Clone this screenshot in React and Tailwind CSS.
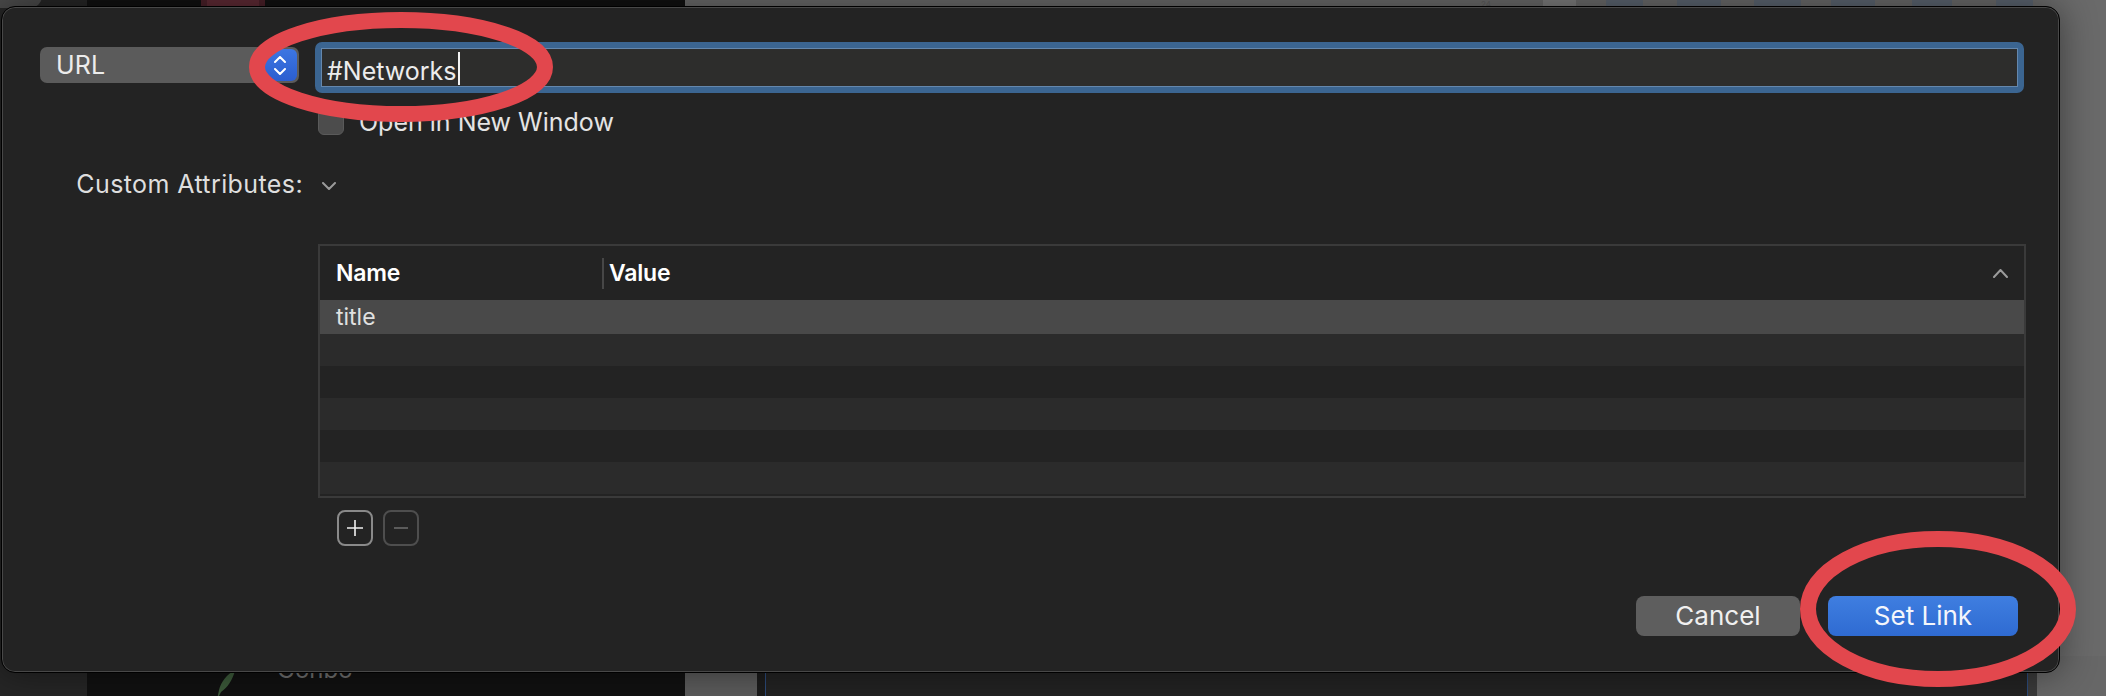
import React from "react";

function Chevron({ dir = "down", className = "", w = 14, h = 8, stroke = "#9c9c9c", sw = 2 }) {
  const d = dir === "down" ? `M1 1 L${w / 2} ${h - 1} L${w - 1} 1` : `M1 ${h - 1} L${w / 2} 1 L${w - 1} ${h - 1}`;
  return (
    <svg width={w} height={h} viewBox={`0 0 ${w} ${h}`} className={className}>
      <path d={d} fill="none" stroke={stroke} strokeWidth={sw} strokeLinecap="round" strokeLinejoin="round" />
    </svg>
  );
}

export default function App() {
  const rows = ["#2b2b2b", "#232323", "#2b2b2b", "#232323", "#2b2b2b"];
  return (
    <div className="relative w-[2106px] h-[696px] overflow-hidden flex font-['Inter',sans-serif]">
      {/* background window behind the sheet */}
      <div className="w-[87px] bg-[#262626] relative">
        <div className="absolute left-[-12px] top-[-22px] w-[54px] h-[30px] rounded-[12px] bg-[#4a4a4a]" />
      </div>
      <div className="w-[598px] bg-[#111111] flex flex-col">
        <div className="ml-[114px] w-[64px] h-[7px] bg-[#5e2a34] border-x-[6px] border-[#4a2029]" />
        <div className="flex-1" />
        <div className="h-[40px] flex items-end pl-[128px] gap-[38px]">
          <svg width="24" height="30" viewBox="0 0 24 30" className="mb-[-4px]">
            <path d="M20 0 C12 4 6 12 4 20 L2 30 L6 22 C12 18 18 10 20 0 Z" fill="#3c5a3a" />
          </svg>
          <span className="text-[24px] leading-none text-[#6e6e6e] mb-[14px]">Gonbo</span>
        </div>
      </div>
      <div className="flex-1 bg-[#6a6a6a] flex flex-col">
        <div className="h-[8px] flex items-start">
          <span className="ml-[796px] text-[8px] leading-[8px] text-[#5a5a5a]">24</span>
          <div className="ml-[52px] w-[33px] h-[6px] bg-[#7c7c7c]" />
          <div className="ml-[30px] w-[37px] h-[6px] bg-[#5b6470]" />
          <div className="ml-[34px] w-[44px] h-[6px] bg-[#5b6470]" />
          <div className="ml-[33px] w-[47px] h-[6px] bg-[#5b6470]" />
          <div className="ml-[30px] w-[44px] h-[6px] bg-[#5b6470]" />
          <div className="ml-[37px] w-[40px] h-[6px] bg-[#5b6470]" />
          <div className="ml-[44px] w-[37px] h-[6px] bg-[#5b6470]" />
        </div>
        <div className="flex-1" />
        <div className="h-[40px] flex">
          <div className="w-[72px] bg-[#5c5c5c]" />
          <div className="w-[8px] bg-[#1c1c1c]" />
          <div className="flex-1 bg-[#232323] border-x border-[#2c4a7a]" />
          <div className="w-[9px] bg-[#3a3a3a]" />
          <div className="w-[69px] bg-[#676767]" />
        </div>
      </div>

      {/* the sheet dialog */}
      <div className="absolute left-[1px] top-[6px] w-[2059px] h-[667px] rounded-[14px] bg-[#232323] border border-black shadow-[inset_0_0_0_1px_#484848,0_0_36px_rgba(0,0,0,0.45)] flex flex-col pt-[35px] text-[#e4e4e4]">
        {/* row 1: popup + field */}
        <div className="flex items-start">
          <div className="ml-[38px] mt-[5px] w-[259px] h-[36px] rounded-[7px] bg-[#5b5b5b] flex items-center justify-between pl-[16px] pr-[2px]">
            <span className="text-[25px] leading-none text-[#ececec] tracking-[0.2px]">URL</span>
            <div className="w-[34px] h-[32px] rounded-[6px] bg-gradient-to-b from-[#3d76e2] to-[#2b5ed0] flex flex-col items-center justify-center gap-[5px]">
              <Chevron dir="up" w={12} h={7} stroke="#ffffff" sw={2} />
              <Chevron dir="down" w={12} h={7} stroke="#ffffff" sw={2} />
            </div>
          </div>
          <div className="ml-[16px] w-[1709px] h-[51px] rounded-[7px] border-[6px] border-[#3b6591]">
            <div className="h-full border border-[#6487ad] bg-[#2d2d2c] flex items-center pl-[5px] pt-[7px]">
              <span className="text-[25px] leading-none text-[#ececec]">#Networks</span>
              <span className="ml-[1px] w-[2px] h-[33px] bg-[#f2f2f2] mt-[-6px]" />
            </div>
          </div>
        </div>

        {/* row 2: checkbox */}
        <div className="flex items-center mt-[16px] ml-[316px] gap-[15px]">
          <div className="w-[26px] h-[26px] rounded-[6px] bg-[#4c4c4c] border border-[#5a5a5a]" />
          <span className="text-[25px] leading-none text-[#e4e4e4]">Open in New Window</span>
        </div>

        {/* row 3: custom attributes */}
        <div className="flex items-center mt-[34px] h-[30px]">
          <span className="w-[301px] text-right text-[25px] leading-none text-[#dedede] tracking-[0.4px]">Custom Attributes:</span>
          <Chevron dir="down" className="ml-[19px] mt-[4px]" w={14} h={8} stroke="#9a9a9a" sw={2} />
        </div>

        {/* row 4: table */}
        <div className="mt-[45px] ml-[316px] w-[1708px] h-[254px] border-2 border-[#3a3a3a] flex flex-col">
          <div className="h-[54px] flex items-center">
            <div className="w-[282px] pl-[16px] text-[23px] font-semibold text-white leading-none tracking-[-0.2px]">Name</div>
            <div className="w-[2px] h-[31px] bg-[#474747]" />
            <div className="flex-1 pl-[5px] text-[23px] font-semibold text-white leading-none tracking-[-0.2px]">Value</div>
            <Chevron dir="up" className="mr-[16px]" w={15} h={9} stroke="#9b9b9b" sw={2} />
          </div>
          <div className="h-[34px] bg-[#494949] flex items-center pl-[16px]">
            <span className="text-[23px] leading-none text-[#e0e0e0]">title</span>
          </div>
          {rows.map((c, i) => (
            <div key={i} className="h-[32px]" style={{ backgroundColor: c }} />
          ))}
        </div>

        {/* row 5: + / - */}
        <div className="flex mt-[12px] ml-[335px] gap-[10px]">
          <div className="w-[36px] h-[36px] rounded-[8px] border-2 border-[#8a8a8a] flex items-center justify-center">
            <svg width="18" height="18" viewBox="0 0 18 18">
              <path d="M9 1 V17 M1 9 H17" stroke="#f0f0f0" strokeWidth="1.6" />
            </svg>
          </div>
          <div className="w-[36px] h-[36px] rounded-[8px] border-2 border-[#4e4e4e] flex items-center justify-center">
            <svg width="14" height="4" viewBox="0 0 14 4">
              <path d="M0 2 H14" stroke="#6a6a6a" strokeWidth="1.6" />
            </svg>
          </div>
        </div>

        {/* row 6: buttons */}
        <div className="flex justify-end mt-[50px] pr-[41px] gap-[28px]">
          <div className="w-[164px] h-[40px] rounded-[8px] bg-[#5e5e5e] flex items-center justify-center text-[26px] leading-none text-[#f0f0f0]">Cancel</div>
          <div className="w-[190px] h-[40px] rounded-[8px] bg-gradient-to-b from-[#3f7ee0] to-[#2f6bd2] flex items-center justify-center text-[26px] leading-none text-[#f4f6fb]">Set Link</div>
        </div>
      </div>

      {/* red annotation ellipses */}
      <svg className="absolute left-0 top-0 pointer-events-none" width="2106" height="696" viewBox="0 0 2106 696">
        <ellipse cx="401" cy="67" rx="144" ry="47" fill="none" stroke="#e2474d" strokeWidth="16" />
        <ellipse cx="1938" cy="609" rx="130" ry="70" fill="none" stroke="#e2474d" strokeWidth="16" />
      </svg>
    </div>
  );
}
